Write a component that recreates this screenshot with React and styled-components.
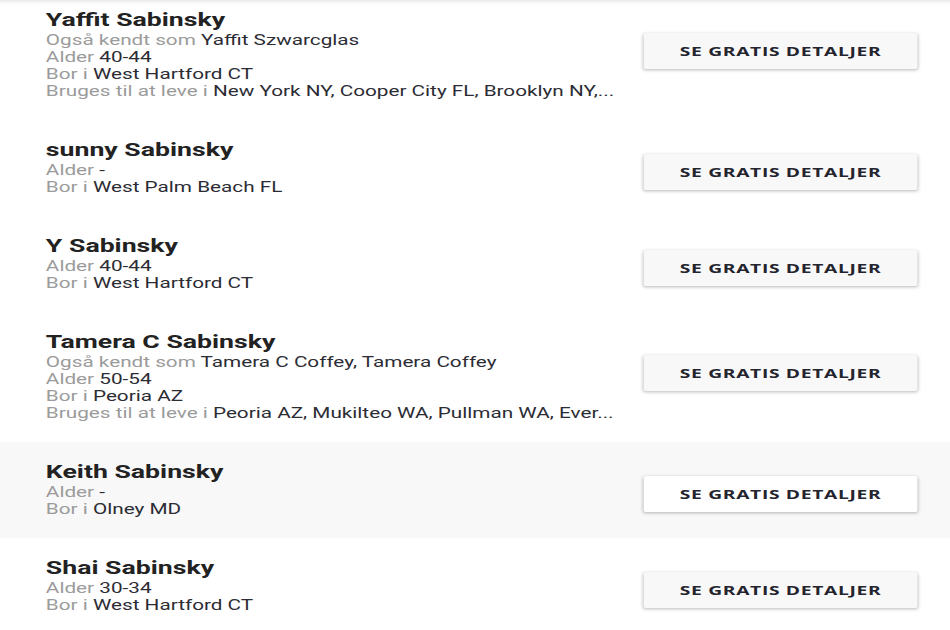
import React from "react";
import styled, { createGlobalStyle } from "styled-components";

// the shot is a ~642px wide page stretched out to 950px, so we lay out at 642 and stretch
const STRETCH = 950 / 642;

const GlobalStyle = createGlobalStyle`
  html, body {
    margin: 0;
    padding: 0;
    background: #ffffff;
    overflow: hidden;
  }
  body {
    font-family: Roboto, "Liberation Sans", Arial, sans-serif;
  }
`;

const Page = styled.div`
  width: 642px;
  height: 630px;
  overflow: hidden;
  transform: scaleX(${STRETCH});
  transform-origin: 0 0;
  box-shadow: inset 0 4px 4px -3px rgba(0, 0, 0, 0.13);
`;

const List = styled.div`
  display: flex;
  flex-direction: column;
`;

const Row = styled.div`
  display: flex;
  align-items: center;
  justify-content: space-between;
  padding: 18px 22px 20px 31px;
  background: ${props => props.$highlight ? '#f8f8f8' : 'transparent'};

  &:first-child {
    padding-top: 8px;
  }
`;

const Info = styled.div`
  display: flex;
  flex-direction: column;
  min-width: 0;
`;

const Name = styled.div`
  font-size: 18px;
  line-height: 24px;
  font-weight: 700;
  color: #222222;
`;

const Line = styled.div`
  font-size: 14px;
  line-height: 17px;
  color: #2c2c34;
  white-space: nowrap;
`;

const Label = styled.span`
  color: #9b9b9b;
`;

const DetailsButton = styled.button`
  flex: none;
  width: 185px;
  height: 36px;
  margin-top: ${props => props.$long ? -6 : 10}px;
  border: none;
  border-radius: 2px;
  background: ${props => props.$highlight ? '#ffffff' : '#f8f8f8'};
  box-shadow: 0 1px 3px rgba(0, 0, 0, 0.28);
  font-family: "Open Sans", "Liberation Sans", Arial, sans-serif;
  font-size: 13px;
  font-weight: 700;
  letter-spacing: 0.45px;
  color: #24242e;
  cursor: pointer;
`;

const people = [
  {
    name: 'Yaffit Sabinsky',
    aka: 'Yaffit Szwarcglas',
    age: '40-44',
    lives: 'West Hartford CT',
    used: 'New York NY, Cooper City FL, Brooklyn NY,...',
  },
  { name: 'sunny Sabinsky', age: '-', lives: 'West Palm Beach FL' },
  { name: 'Y Sabinsky', age: '40-44', lives: 'West Hartford CT' },
  {
    name: 'Tamera C Sabinsky',
    aka: 'Tamera C Coffey, Tamera Coffey',
    age: '50-54',
    lives: 'Peoria AZ',
    used: 'Peoria AZ, Mukilteo WA, Pullman WA, Ever...',
  },
  { name: 'Keith Sabinsky', age: '-', lives: 'Olney MD', highlight: true },
  { name: 'Shai Sabinsky', age: '30-34', lives: 'West Hartford CT' },
];

function PersonRow({ person }) {
  const long = Boolean(person.aka);
  return (
    <Row $highlight={person.highlight}>
      <Info>
        <Name>{person.name}</Name>
        {person.aka && <Line><Label>Også kendt som </Label>{person.aka}</Line>}
        <Line><Label>Alder </Label>{person.age}</Line>
        <Line><Label>Bor i </Label>{person.lives}</Line>
        {person.used && <Line><Label>Bruges til at leve i </Label>{person.used}</Line>}
      </Info>
      <DetailsButton $long={long} $highlight={person.highlight}>
        SE GRATIS DETALJER
      </DetailsButton>
    </Row>
  );
}

export default function App() {
  return (
    <>
      <GlobalStyle />
      <Page>
        <List>
          {people.map((person, i) => (
            <PersonRow key={i} person={person} />
          ))}
        </List>
      </Page>
    </>
  );
}
